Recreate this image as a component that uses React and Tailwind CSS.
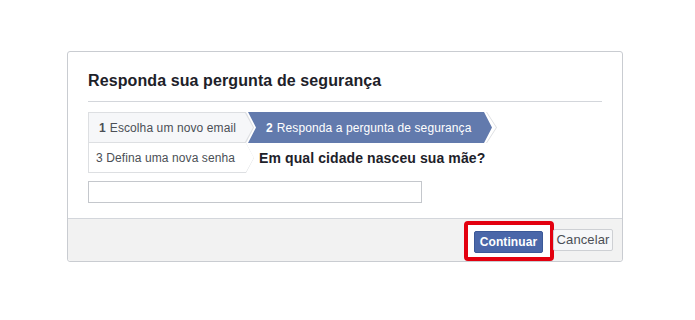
export default function App() {
  return (
    <div className="min-h-[320px] bg-white pt-[51px] font-['Liberation_Sans',Arial,sans-serif] tracking-[0.1px]">
      <div className="ml-[67px] w-[556px] rounded-[3px] border border-[#c9ccd1] bg-white">
        <div className="px-5 pt-[19px] pb-[15px]">
          <h2 className="text-[16px] leading-[20px] font-bold text-[#1d2129]">
            Responda sua pergunta de segurança
          </h2>
          <div className="mt-[10px] h-px bg-[#d3d6db]" />

          {/* steps */}
          <div className="mt-[10px] flex h-[31px] items-stretch">
            <div className="w-[166px] bg-[#dddfe2] p-px [clip-path:polygon(0_0,calc(100%_-_8px)_0,100%_50%,calc(100%_-_8px)_100%,0_100%)]">
              <div className="flex h-full items-center bg-[#f6f7f9] pl-[10px] text-[12px] text-[#4b4f56] [clip-path:polygon(0_0,calc(100%_-_8px)_0,100%_50%,calc(100%_-_8px)_100%,0_100%)]">
                <b className="mr-1 text-[#4b4f56]">1</b>Escolha um novo email
              </div>
            </div>
            <div className="ml-[-6px] flex w-[244px] items-center bg-[#627aad] pl-[18px] text-[12px] text-white [clip-path:polygon(0_0,calc(100%_-_8px)_0,100%_50%,calc(100%_-_8px)_100%,0_100%,8px_50%)]">
              <b className="mr-1">2</b>Responda a pergunta de segurança
            </div>
            <div className="ml-[-6px] w-[11px] bg-[#dddfe2] [clip-path:polygon(0_0,1px_0,100%_50%,1px_100%,0_100%,calc(100%_-_1px)_50%)]" />
          </div>
          <div className="flex h-[30px] items-center">
            <div className="h-full w-[166px] bg-[#dddfe2] pb-px pl-px [clip-path:polygon(0_0,calc(100%_-_8px)_0,100%_50%,calc(100%_-_8px)_100%,0_100%)]">
              <div className="flex h-full items-center bg-white pl-[7px] text-[12px] text-[#4b4f56] [clip-path:polygon(0_0,calc(100%_-_8px)_0,100%_50%,calc(100%_-_8px)_100%,0_100%)]">
                3 Defina uma nova senha
              </div>
            </div>
            <p className="ml-[5px] text-[14px] font-bold text-[#1d2129]">
              Em qual cidade nasceu sua mãe?
            </p>
          </div>

          <input
            type="text"
            className="mt-2 block h-[22px] w-[334px] border border-[#c4c7cc] bg-white px-1 text-[12px] outline-none"
          />
        </div>

        <div className="flex justify-end gap-[10px] rounded-b-[3px] border-t border-[#d3d6db] bg-[#f2f2f2] pt-[10px] pr-[9px] pb-[8px]">
          <div className="relative">
            <div className="absolute top-[-8px] right-[-11px] bottom-[-8px] left-[-10px] rounded-[4px] border-4 border-[#e3000f] bg-white" />
            <button className="relative h-[22px] w-[69px] rounded-[2px] border border-[#3b5998] bg-[#4a67a9] text-[12px] font-bold text-white">
              Continuar
            </button>
          </div>
          <button className="relative h-[22px] w-[60px] rounded-[2px] border border-[#ced0d4] bg-[#f6f7f9] text-[13px] text-[#4b4f56]">
            Cancelar
          </button>
        </div>
      </div>
    </div>
  );
}
